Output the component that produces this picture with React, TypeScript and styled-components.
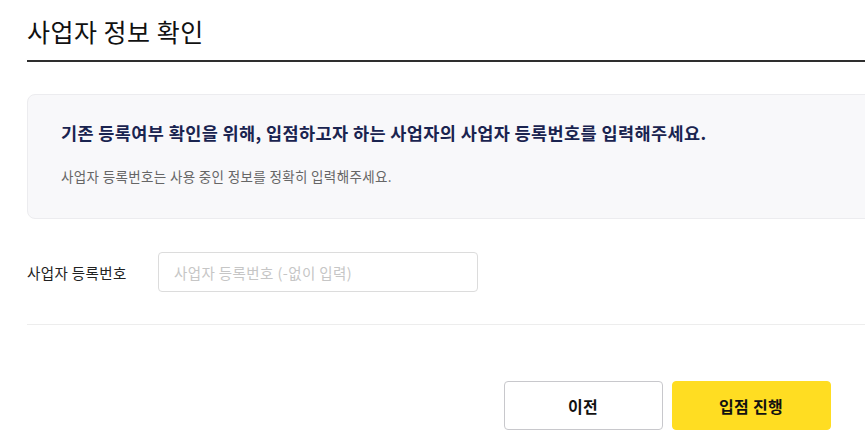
import React from "react";
import styled, { createGlobalStyle } from "styled-components";

const GlobalStyle = createGlobalStyle`
  html, body {
    margin: 0;
    padding: 0;
    overflow: hidden;
    background: #ffffff;
  }
  body {
    font-family: "Noto Sans CJK KR", "Noto Sans", sans-serif;
    color: #111;
  }
  * { box-sizing: border-box; }
`;

const Page = styled.div`
  width: 1307px;
  padding-left: 27px;
`;

const Header = styled.header`
  padding: 13px 0 10px;
  border-bottom: 2px solid #2e2e2e;
`;

const Title = styled.h1`
  margin: 0;
  font-size: 25px;
  line-height: 37px;
  font-weight: 400;
  letter-spacing: 0.5px;
  color: #111;
`;

const InfoBox = styled.section`
  margin-top: 32px;
  padding: 25px 33px 32px;
  background: #f8f8fa;
  border: 1px solid #ececef;
  border-radius: 8px;
`;

const InfoHeading = styled.p`
  margin: 0;
  font-size: 17.5px;
  line-height: 26px;
  font-weight: 700;
  color: #1a2450;
  letter-spacing: 0.4px;
`;

const InfoText = styled.p`
  margin: 20px 0 0;
  font-size: 13.5px;
  line-height: 20px;
  letter-spacing: 0.35px;
  color: #666;
`;

const FormRow = styled.div`
  display: flex;
  align-items: center;
  margin-top: 33px;
  padding-bottom: 32px;
  border-bottom: 1px solid #ededed;
`;

const Label = styled.label`
  width: 131px;
  font-size: 14.5px;
  letter-spacing: 0.4px;
  color: #222;
`;

const Input = styled.input`
  width: 320px;
  height: 40px;
  padding: 0 15px;
  border: 1px solid #dcdcdc;
  border-radius: 4px;
  font-family: inherit;
  font-size: 14.5px;
  letter-spacing: 0.4px;
  color: #222;
  outline: none;
  &::placeholder {
    color: #c6c6c6;
  }
`;

const Actions = styled.div`
  display: flex;
  justify-content: center;
  gap: 9px;
  margin-top: 56px;
`;

const Button = styled.button<{ $primary?: boolean }>`
  width: 159px;
  height: 49px;
  border-radius: 4px;
  font-family: inherit;
  font-size: 16px;
  font-weight: 700;
  letter-spacing: 0.3px;
  color: #111;
  cursor: pointer;
  background: ${(p) => (p.$primary ? "#ffdd22" : "#ffffff")};
  border: 1px solid ${(p) => (p.$primary ? "#ffdd22" : "#c8c8cc")};
`;

export default function App() {
  return (
    <>
      <GlobalStyle />
      <Page>
        <Header>
          <Title>사업자 정보 확인</Title>
        </Header>
        <InfoBox>
          <InfoHeading>
            기존 등록여부 확인을 위해, 입점하고자 하는 사업자의 사업자 등록번호를 입력해주세요.
          </InfoHeading>
          <InfoText>사업자 등록번호는 사용 중인 정보를 정확히 입력해주세요.</InfoText>
        </InfoBox>
        <FormRow>
          <Label htmlFor="bizno">사업자 등록번호</Label>
          <Input id="bizno" placeholder="사업자 등록번호 (-없이 입력)" />
        </FormRow>
        <Actions>
          <Button>이전</Button>
          <Button $primary>입점 진행</Button>
        </Actions>
      </Page>
    </>
  );
}
